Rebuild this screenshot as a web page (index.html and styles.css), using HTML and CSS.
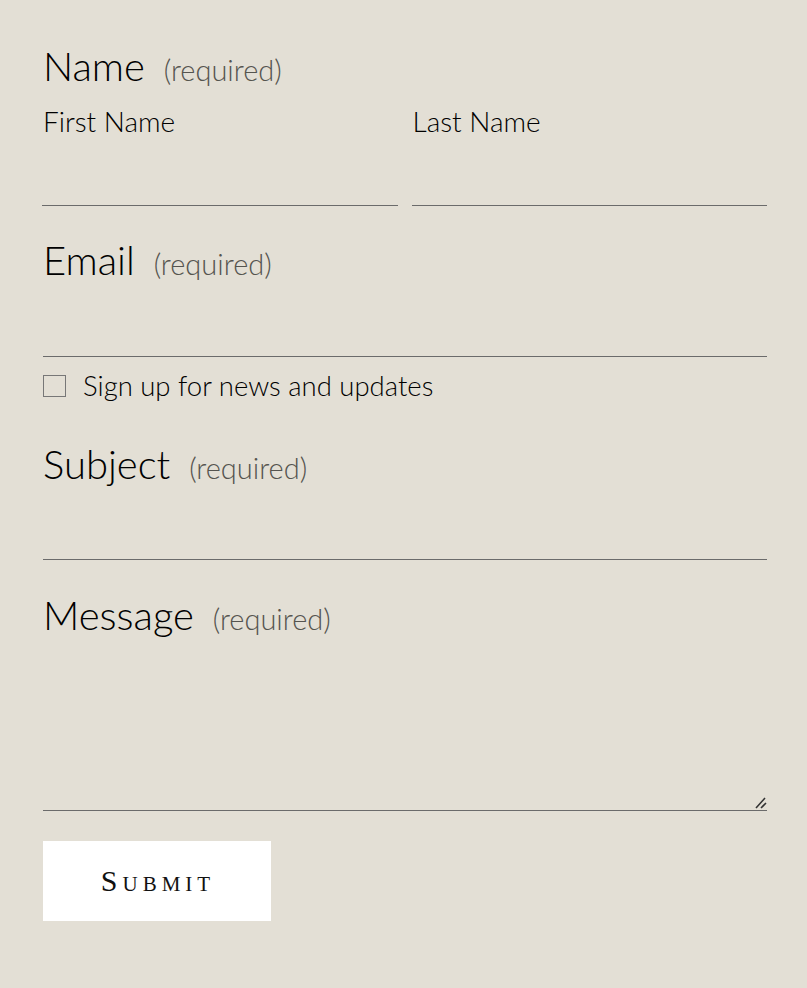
FILE: index.html
```html
<!DOCTYPE html>
<html lang="en">
<head>
<meta charset="utf-8">
<title>Contact form</title>
<link rel="stylesheet" href="styles.css">
</head>
<body>
<form class="form">
  <fieldset class="field name-field">
    <legend class="title">Name <span class="req">(required)</span></legend>
    <div class="name-row">
      <label class="sub">
        <span class="sub-label">First Name</span>
        <input class="line-input" type="text">
      </label>
      <label class="sub">
        <span class="sub-label">Last Name</span>
        <input class="line-input" type="text">
      </label>
    </div>
  </fieldset>

  <label class="field email-field">
    <span class="title">Email <span class="req">(required)</span></span>
    <input class="line-input" type="email">
  </label>

  <label class="check-row">
    <span class="box"></span>
    <span class="check-text">Sign up for news and updates</span>
  </label>

  <label class="field subject-field">
    <span class="title">Subject <span class="req">(required)</span></span>
    <input class="line-input" type="text">
  </label>

  <label class="field message-field">
    <span class="title">Message <span class="req">(required)</span></span>
    <span class="textarea-wrap">
      <svg class="grip" width="14" height="12" viewBox="0 0 14 12"><path d="M12 1 L3 11 M13 6 L8 11" stroke="#333" stroke-width="1.6" fill="none"/></svg>
    </span>
  </label>

  <button class="submit" type="button">Submit</button>
</form>
</body>
</html>
```

FILE: styles.css
```css
* { box-sizing: border-box; }
html, body { margin: 0; padding: 0; }
body {
  background: #e3dfd5;
  color: #000;
  font-family: "Lato", "Open Sans", sans-serif;
  font-weight: 300;
  width: 807px;
  height: 988px;
}
.form {
  padding: 46px 40px 0 43px;
  display: flex;
  flex-direction: column;
}
.field {
  display: flex;
  flex-direction: column;
  border: 0;
  margin: 0;
  padding: 0;
}
.title {
  font-size: 40px;
  line-height: 40px;
  display: block;
  padding: 0;
  white-space: nowrap;
}
.req {
  font-size: 29px;
  color: #55544f;
  margin-left: 8px;
}
.name-row {
  display: grid;
  grid-template-columns: 1fr 1fr;
  column-gap: 15px;
  margin-top: 16px;
}
.sub { display: flex; flex-direction: column; }
.sub-label {
  font-size: 28px;
  line-height: 30px;
}
.line-input {
  display: block;
  width: 100%;
  border: 0;
  border-bottom: 1px solid #6b6b6b;
  background: transparent;
  height: 70px;
  margin: 0;
  padding: 0;
  outline: none;
}
.name-field .line-input { margin-left: -1px; width: calc(100% + 1px); }
.email-field { margin-top: 34px; }
.email-field .line-input { height: 73px; }
.check-row {
  display: flex;
  align-items: flex-start;
  margin-top: 13px;
  gap: 17px;
}
.box {
  width: 23px;
  height: 22px;
  margin-top: 5px;
  border: 1px solid #777;
  flex: none;
}
.check-text {
  font-size: 27.5px;
  line-height: 32px;
}
.subject-field { margin-top: 42px; }
.subject-field .line-input { height: 72px; }
.message-field { margin-top: 35px; }
.textarea-wrap {
  position: relative;
  display: block;
  height: 172px;
  border-bottom: 1px solid #6b6b6b;
}
.grip {
  position: absolute;
  right: 0;
  bottom: 1px;
}
.submit {
  align-self: flex-start;
  margin-top: 30px;
  width: 228px;
  height: 80px;
  border: 0;
  background: #fff;
  font-family: "Liberation Serif", serif;
  font-variant: small-caps;
  font-size: 30px;
  letter-spacing: 5px;
  color: #111;
  padding: 0 0 0 2px;
}
```
